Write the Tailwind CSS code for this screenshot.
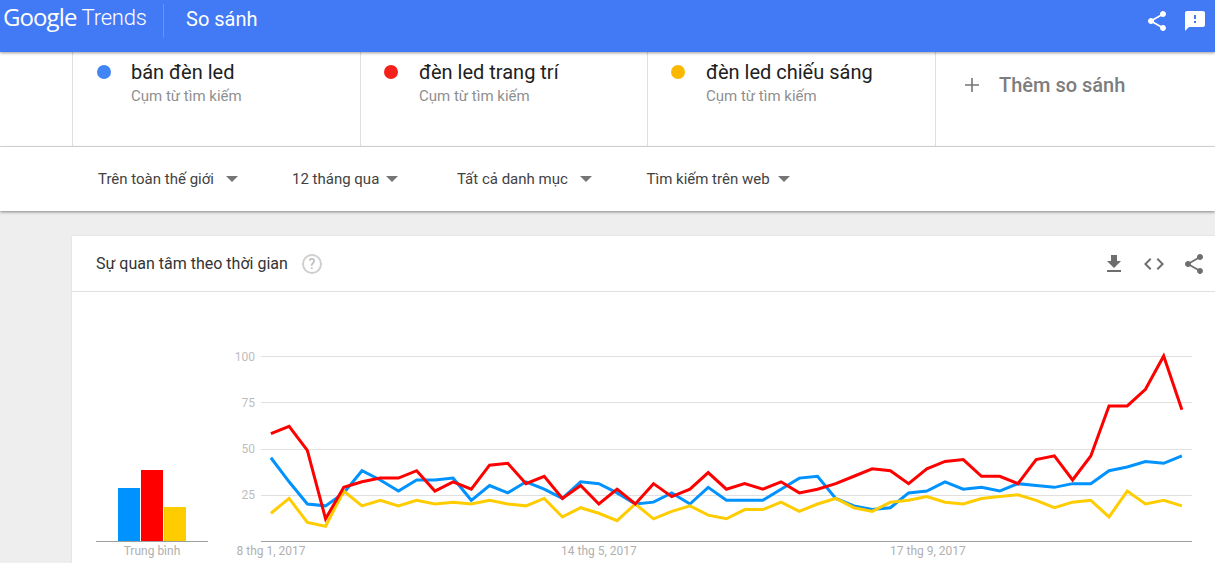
<!DOCTYPE html>
<html lang="vi">
<head>
    <meta charset="UTF-8">
    <title>So sánh - Google Trends</title>
    <script src="https://cdn.jsdelivr.net/npm/@tailwindcss/browser@4"></script>
</head>
<body class="bg-[#eeeeee] h-[563px] overflow-hidden font-['Roboto',sans-serif]">
    <!-- top bar -->
    <header class="relative z-20 h-[52px] bg-[#4279f5] shadow-[0_1px_3px_rgba(0,0,0,0.4)] flex items-start text-white">
        <div class="w-[164px] h-[34px] mt-[4px] pl-[3px] border-r border-white/20 flex items-start">
            <span class="text-[24px] leading-[26px] font-['Open_Sans',sans-serif] tracking-[-0.9px]">Google</span>
            <span class="ml-[5px] mt-[1px] text-[22px] leading-[26px] font-light tracking-[-0.2px]">Trends</span>
        </div>
        <h1 class="ml-[22px] mt-[5px] text-[20px] leading-[28px]">So sánh</h1>
        <div class="ml-auto mt-[9px] mr-[8px] flex gap-[14px]">
            <svg class="w-[24px] h-[24px] fill-white" viewBox="0 0 24 24"><path d="M18 16.08c-.76 0-1.44.3-1.96.77L8.91 12.7c.05-.23.09-.46.09-.7s-.04-.47-.09-.7l7.05-4.11c.54.5 1.25.81 2.04.81 1.66 0 3-1.34 3-3s-1.34-3-3-3-3 1.34-3 3c0 .24.04.47.09.7L8.04 9.81C7.5 9.31 6.79 9 6 9c-1.66 0-3 1.34-3 3s1.34 3 3 3c.79 0 1.5-.31 2.04-.81l7.12 4.16c-.05.21-.08.43-.08.65 0 1.61 1.31 2.92 2.92 2.92 1.61 0 2.92-1.31 2.92-2.92s-1.31-2.92-2.92-2.92z"/></svg>
            <svg class="w-[24px] h-[24px] fill-white" viewBox="0 0 24 24"><path d="M20 2H4c-1.1 0-1.99.9-1.99 2L2 22l4-4h14c1.1 0 2-.9 2-2V4c0-1.1-.9-2-2-2zm-7 12h-2v-2h2v2zm0-4h-2V6h2v4z"/></svg>
        </div>
    </header>

    <!-- search terms -->
    <section class="bg-white h-[95px] border-b border-[#e0e0e0] pl-[72px] flex">
        <div class="w-[288px] h-full border-l border-[#e0e0e0] pl-[24px] flex items-start">
            <span class="w-[14px] h-[14px] mt-[13px] rounded-full bg-[#4285f4]"></span>
            <div class="ml-[20px] mt-[7px]">
                <div class="text-[20px] leading-[26px] text-[#212121]">bán đèn led</div>
                <div class="text-[15px] leading-[20px] mt-[1px] text-[#8f8f8f]">Cụm từ tìm kiếm</div>
            </div>
        </div>
        <div class="w-[287px] h-full border-l border-[#e0e0e0] pl-[23px] flex items-start">
            <span class="w-[14px] h-[14px] mt-[13px] rounded-full bg-[#f4201c]"></span>
            <div class="ml-[21px] mt-[7px]">
                <div class="text-[20px] leading-[26px] text-[#212121]">đèn led trang trí</div>
                <div class="text-[15px] leading-[20px] mt-[1px] text-[#8f8f8f]">Cụm từ tìm kiếm</div>
            </div>
        </div>
        <div class="w-[288px] h-full border-l border-[#e0e0e0] pl-[23px] flex items-start">
            <span class="w-[14px] h-[14px] mt-[13px] rounded-full bg-[#fbb800]"></span>
            <div class="ml-[21px] mt-[7px]">
                <div class="text-[20px] leading-[26px] text-[#212121]">đèn led chiếu sáng</div>
                <div class="text-[15px] leading-[20px] mt-[1px] text-[#8f8f8f]">Cụm từ tìm kiếm</div>
            </div>
        </div>
        <div class="flex-1 h-full border-l border-[#e0e0e0] pl-[24px] flex items-start">
            <svg class="w-[24px] h-[24px] mt-[21px] fill-[#757575]" viewBox="0 0 24 24"><path d="M19 12.8h-6.2V19h-1.6v-6.2H5v-1.6h6.2V5h1.6v6.2H19v1.6z"/></svg>
            <span class="ml-[15px] mt-[19px] text-[20px] leading-[28px] font-medium text-[#7d7d7d]">Thêm so sánh</span>
        </div>
    </section>

    <!-- filters -->
    <section class="relative z-10 bg-white h-[64px] shadow-[0_1px_3px_rgba(0,0,0,0.45)] flex items-center text-[15px] text-[#424242]">
        <div class="w-[292px] pl-[98px] flex items-center shrink-0 whitespace-nowrap">Trên toàn thế giới<span class="ml-[12px] border-x-[6px] border-x-transparent border-t-[6px] border-t-[#757575]"></span></div>
        <div class="w-[165px] flex items-center shrink-0 whitespace-nowrap">12 tháng qua<span class="ml-[7px] border-x-[6px] border-x-transparent border-t-[6px] border-t-[#757575]"></span></div>
        <div class="w-[189.5px] flex items-center shrink-0 whitespace-nowrap">Tất cả danh mục<span class="ml-[12px] border-x-[6px] border-x-transparent border-t-[6px] border-t-[#757575]"></span></div>
        <div class="flex items-center shrink-0 whitespace-nowrap">Tìm kiếm trên web<span class="ml-[8px] border-x-[6px] border-x-transparent border-t-[6px] border-t-[#757575]"></span></div>
    </section>

    <!-- interest over time card -->
    <section class="ml-[72px] mt-[25px] bg-white shadow-[0_0_2px_rgba(0,0,0,0.1)]">
        <div class="h-[56px] border-b border-[#e0e0e0] pl-[24px] pr-[9px] flex items-center">
            <h2 class="text-[16px] text-[#333333]">Sự quan tâm theo thời gian</h2>
            <span class="ml-[14px] w-[20px] h-[20px] rounded-full border-2 border-[#cfcfcf] text-[#bdbdbd] text-[14px] leading-[16px] text-center font-medium">?</span>
            <div class="ml-auto flex gap-[16px]">
                <svg class="w-[24px] h-[24px] fill-[#6e6e6e]" viewBox="0 0 24 24"><path d="M19 9h-4V3H9v6H5l7 7 7-7zM5 18v2h14v-2H5z"/></svg>
                <svg class="w-[24px] h-[24px] fill-[#6e6e6e]" viewBox="0 0 24 24"><path d="M9.4 16.6L4.8 12l4.6-4.6L8 6l-6 6 6 6 1.4-1.4zm5.2 0l4.6-4.6-4.6-4.6L16 6l6 6-6 6-1.4-1.4z"/></svg>
                <svg class="w-[24px] h-[24px] fill-[#6e6e6e]" viewBox="0 0 24 24"><path d="M18 16.08c-.76 0-1.44.3-1.96.77L8.91 12.7c.05-.23.09-.46.09-.7s-.04-.47-.09-.7l7.05-4.11c.54.5 1.25.81 2.04.81 1.66 0 3-1.34 3-3s-1.34-3-3-3-3 1.34-3 3c0 .24.04.47.09.7L8.04 9.81C7.5 9.31 6.79 9 6 9c-1.66 0-3 1.34-3 3s1.34 3 3 3c.79 0 1.5-.31 2.04-.81l7.12 4.16c-.05.21-.08.43-.08.65 0 1.61 1.31 2.92 2.92 2.92 1.61 0 2.92-1.31 2.92-2.92s-1.31-2.92-2.92-2.92z"/></svg>
            </div>
        </div>
        <!-- svg origin is the card's body corner, page (72,292) -->
        <svg id="chart" class="block w-[1143px] h-[271px] font-['Roboto',sans-serif]" viewBox="72 292 1143 271">
            <g id="grid"></g>
            <g fill="#bdbdbd" font-size="12" text-anchor="end">
                <text x="255" y="361">100</text>
                <text x="255" y="407">75</text>
                <text x="255" y="453">50</text>
                <text x="255" y="499">25</text>
            </g>
            <rect x="118" y="488" width="22" height="53" fill="#0092ff"/>
            <rect x="141" y="470" width="22" height="71" fill="#ff0000"/>
            <rect x="164" y="507" width="22" height="34" fill="#ffcc00"/>
            <line x1="96" y1="541.5" x2="208" y2="541.5" stroke="#9e9e9e"/>
            <line x1="261" y1="541.5" x2="1192" y2="541.5" stroke="#9e9e9e"/>
            <g fill="#b0b0b0" font-size="12">
                <text x="152" y="555" text-anchor="middle">Trung bình</text>
                <text x="236.500" y="555">8 thg 1, 2017</text>
                <text x="561" y="555">14 thg 5, 2017</text>
                <text x="890" y="555">17 thg 9, 2017</text>
            </g>
            <g id="lines" fill="none" stroke-width="3" stroke-linejoin="miter"></g>
        </svg>
    </section>

    <script>
        const series = [
            { color: '#0092ff', values: [45,32,20,19,26,38,33,27,33,33,34,22,30,26,32,28,23,32,31,26,20,21,26,20,29,22,22,22,28,34,35,23,19,17,18,26,27,32,28,29,27,31,30,29,31,31,38,40,43,42,46] },
            { color: '#ffcc00', values: [15,23,10,8,27,19,22,19,22,20,21,20,22,20,19,23,13,18,15,11,20,12,16,19,14,12,17,17,21,16,20,23,18,16,21,22,24,21,20,23,24,25,22,18,21,22,13,27,20,22,19] },
            { color: '#ff0000', values: [58,62,49,12,29,32,34,34,38,27,32,28,41,42,31,35,23,30,20,28,20,31,24,28,37,28,31,28,32,26,28,31,35,39,38,31,39,43,44,35,35,31,44,46,33,46,73,73,82,100,71] }
        ];
        const svgNs = 'http://www.w3.org/2000/svg';
        const xOf = i => 270.9 + i * 18.22;
        const yOf = v => 541 - v * 1.85;

        [25, 50, 75, 100].forEach(v => {
            const line = document.createElementNS(svgNs, 'line');
            const y = Math.round(yOf(v)) + 0.5;
            line.setAttribute('x1', 261);
            line.setAttribute('x2', 1192);
            line.setAttribute('y1', y);
            line.setAttribute('y2', y);
            line.setAttribute('stroke', '#e0e0e0');
            document.getElementById('grid').appendChild(line);
        });

        series.forEach(s => {
            const line = document.createElementNS(svgNs, 'polyline');
            line.setAttribute('points', s.values.map((v, i) => `${xOf(i)},${yOf(v)}`).join(' '));
            line.setAttribute('stroke', s.color);
            document.getElementById('lines').appendChild(line);
        });
    </script>
</body>
</html>
